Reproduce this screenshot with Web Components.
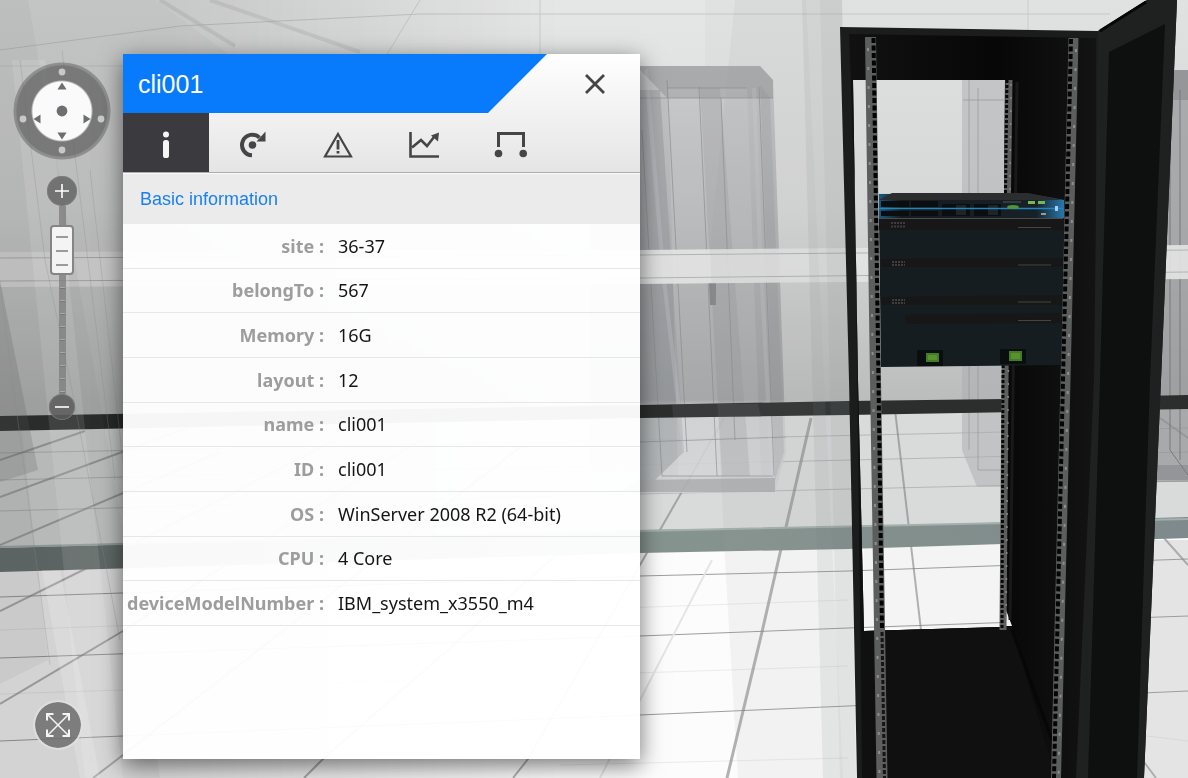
<!DOCTYPE html>
<html lang="en">
<head>
<meta charset="utf-8">
<title>Device cli001</title>
<meta name="viewport" content="width=device-width, initial-scale=1">
<style>
  html, body { margin: 0; height: 100%; }
  body { font-family: "Noto Sans", "Open Sans", sans-serif; background: #d4d5d5; }
</style>
</head>
<body>
<room-viewer>
  <room-scene slot="scene"></room-scene>
  <pan-pad slot="controls"></pan-pad>
  <zoom-slider slot="controls" value="86"></zoom-slider>
  <fullscreen-button slot="corner"></fullscreen-button>
  <device-panel>
    <span slot="title">cli001</span>
    <icon-tabs slot="tabs"></icon-tabs>
    <span slot="section">Basic information</span>
    <property-table></property-table>
  </device-panel>
</room-viewer>

<template id="t-room-viewer">
  <style>
    :host { display: grid; min-height: 100vh; overflow: hidden; }
    .scene, .ui { grid-area: 1 / 1; min-width: 0; }
    .scene { display: grid; }
    .ui { z-index: 1; display: flex; gap: 12px; padding: 54px 16px 19px 13px; }
    .rail { flex: none; width: 98px; display: flex; flex-direction: column; justify-content: space-between; padding: 8px 0 9px; }
    .top { display: flex; flex-direction: column; align-items: center; gap: 16px; }
    .corner { display: flex; padding-left: 20px; }
  </style>
  <div class="scene"><slot name="scene"></slot></div>
  <main class="ui">
    <div class="rail">
      <div class="top"><slot name="controls"></slot></div>
      <div class="corner"><slot name="corner"></slot></div>
    </div>
    <slot></slot>
  </main>
</template>

<template id="t-pan-pad">
  <style>
    :host { display: block; }
    .pad { width: 98px; height: 98px; display: grid; grid-template: 38px 22px 38px / 38px 22px 38px; border-radius: 50%;
      background: radial-gradient(circle, #fafafa 29px, rgba(98,98,98,.76) 31px, rgba(98,98,98,.76) 45px, rgba(98,98,98,.55) 46px, rgba(98,98,98,.5) 48px, transparent 49px); }
    button { border: 0; padding: 0; margin: 0; background: none; display: grid; place-items: center; cursor: pointer; }
    svg { display: block; }
    .up { grid-area: 1 / 2; } .left { grid-area: 2 / 1; } .mid { grid-area: 2 / 2; } .right { grid-area: 2 / 3; } .down { grid-area: 3 / 2; }
    .left svg { transform: rotate(-90deg); } .right svg { transform: rotate(90deg); } .down svg { transform: rotate(180deg); }
  </style>
  <div class="pad" role="group" aria-label="Pan">
    <button class="up" aria-label="Up"><svg width="22" height="38"><circle cx="11" cy="10" r="3.400" fill="#c8c8c8"/><path d="M11 20.500l4.600 7H6.400z" fill="#6c6e72"/></svg></button>
    <button class="left" aria-label="Left"><svg width="22" height="38"><circle cx="11" cy="10" r="3.400" fill="#c8c8c8"/><path d="M11 20.500l4.600 7H6.400z" fill="#6c6e72"/></svg></button>
    <button class="mid" aria-label="Reset"><svg width="22" height="22"><circle cx="11" cy="11" r="5.400" fill="#6c6e72"/></svg></button>
    <button class="right" aria-label="Right"><svg width="22" height="38"><circle cx="11" cy="10" r="3.400" fill="#c8c8c8"/><path d="M11 20.500l4.600 7H6.400z" fill="#6c6e72"/></svg></button>
    <button class="down" aria-label="Down"><svg width="22" height="38"><circle cx="11" cy="10" r="3.400" fill="#c8c8c8"/><path d="M11 20.500l4.600 7H6.400z" fill="#6c6e72"/></svg></button>
  </div>
</template>

<template id="t-zoom-slider">
  <style>
    :host { display: flex; flex-direction: column; align-items: center; }
    button { border: 0; padding: 0; width: 30px; height: 30px; border-radius: 50%; background: rgba(98,98,98,.82); box-shadow: inset 0 0 0 1px rgba(130,130,130,.6); display: grid; place-items: center; cursor: pointer; }
    button.out { width: 26px; height: 26px; background: rgba(90,90,90,.85); }
    input { appearance: none; -webkit-appearance: none; writing-mode: vertical-lr; direction: rtl; margin: 0; width: 24px; height: 188px;
      background:
        repeating-linear-gradient(#0000 0 11px, #a9a9a9 11px 12px, #777 12px 13px) center 70px / 5px 118px no-repeat,
        linear-gradient(rgba(124,124,124,.75), rgba(124,124,124,.75)) center / 7px 100% no-repeat; }
    input::-webkit-slider-thumb { -webkit-appearance: none; width: 24px; height: 50px; border-radius: 4px; border: 2px solid #858585;
      background:
        linear-gradient(#9b9b9b, #9b9b9b) center 9px / 12px 2px no-repeat,
        linear-gradient(#9b9b9b, #9b9b9b) center 23px / 12px 2px no-repeat,
        linear-gradient(#9b9b9b, #9b9b9b) center 37px / 12px 2px no-repeat, #f4f4f4; box-sizing: border-box; }
  </style>
  <button class="in" aria-label="Zoom in"><svg width="14" height="14"><path d="M7 0v14M0 7h14" stroke="#fff" stroke-width="1.600"/></svg></button>
  <input type="range" min="0" max="100" aria-label="Zoom">
  <button class="out" aria-label="Zoom out"><svg width="14" height="14"><path d="M0 7h14" stroke="#fff" stroke-width="1.600"/></svg></button>
</template>

<template id="t-fullscreen-button">
  <style>
    :host { display: block; }
    button { width: 50px; height: 50px; padding: 0; border-radius: 50%; border: 2px solid rgba(225,225,225,.8); background: rgba(112,112,112,.88); background-clip: padding-box; display: grid; place-items: center; cursor: pointer; }
  </style>
  <button aria-label="Full screen"><svg width="26" height="26" fill="none" stroke="#f4f4f4"><path d="M2 8.500V2h6.500M17.500 2H24v6.500M24 17.500V24h-6.500M8.500 24H2v-6.500" stroke-width="2"/><path d="M3 3l20 20M23 3L3 23" stroke-width="1.500"/></svg></button>
</template>

<template id="t-device-panel">
  <style>
    :host { display: flex; flex-direction: column; flex: 0 1 517px; min-width: 0; background: rgba(255,255,255,.96); box-shadow: 0 6px 22px rgba(0,0,0,.55); }
    .top { background: linear-gradient(#fff, #f3f3f3 45%, #e5e5e5); border-bottom: 1px solid #acacac; }
    header { display: flex; justify-content: space-between; height: 59px; }
    h1 { margin: 0; flex: 0 1 424px; box-sizing: border-box; padding-left: 15px; background: #077bfb; clip-path: polygon(0 0, 100% 0, calc(100% - 59px) 100%, 0 100%); color: #fff; font: 25px/60px "Liberation Sans", Arial, sans-serif; }
    .close { flex: none; width: 90px; border: 0; padding: 0; background: none; display: grid; place-items: center; cursor: pointer; }
    h2 { margin: 0; padding: 0 17px; border-top: 1px solid #fbfbfb; background: #ebebeb; color: #1a80f0; font: 18px/50px "Liberation Sans", Arial, sans-serif; }
  </style>
  <div class="top">
    <header>
      <h1><slot name="title"></slot></h1>
      <button class="close" aria-label="Close"><svg width="20" height="20"><path d="M1 1l18 18M19 1L1 19" stroke="#454545" stroke-width="2.800"/></svg></button>
    </header>
    <slot name="tabs"></slot>
  </div>
  <h2><slot name="section"></slot></h2>
  <slot></slot>
</template>

<template id="t-icon-tabs">
  <style>
    :host { display: flex; }
    button { flex: 0 1 86px; height: 59px; border: 0; padding: 4px 0 0; background: none; display: grid; place-items: center; color: #454547; cursor: pointer; }
    button[aria-selected="true"] { background: #3a3a3f; color: #f5f5f5; }
    [role=tablist] { display: flex; flex: 1; }
  </style>
  <div role="tablist">
    <button role="tab" aria-selected="true" aria-label="Information"><svg width="30" height="30" fill="currentColor"><circle cx="15" cy="4.500" r="3"/><rect x="12" y="10" width="6" height="18" rx="2.600"/></svg></button>
    <button role="tab" aria-selected="false" aria-label="Refresh"><svg width="30" height="30" fill="currentColor"><path d="M15 25.300A10.300 10.300 0 1 1 22.500 7.600" fill="none" stroke="currentColor" stroke-width="4"/><path d="M28.500 1.500v10h-9z"/><circle cx="15.500" cy="15" r="3.800"/></svg></button>
    <button role="tab" aria-selected="false" aria-label="Alarms"><svg width="32" height="30" fill="none" stroke="currentColor"><path d="M16 4L29 26.500H3z" stroke-width="2.200"/><path d="M16 10v9.500M16 21v2.500" stroke-width="2.800"/></svg></button>
    <button role="tab" aria-selected="false" aria-label="Statistics"><svg width="32" height="30" fill="none" stroke="currentColor" stroke-width="2.600"><path d="M2.500 2v24.500H31"/><path d="M4 17.500L13 10l6 6L26 7"/><path d="M31 2.500L23 5.500l7 6z" fill="currentColor" stroke="none"/></svg></button>
    <button role="tab" aria-selected="false" aria-label="Links"><svg width="34" height="30" fill="currentColor"><path d="M5.500 17V3.500h25V17" fill="none" stroke="currentColor" stroke-width="3"/><circle cx="5.500" cy="23.500" r="3.800"/><circle cx="30.200" cy="23.500" r="3.800"/></svg></button>
  </div>
</template>

<template id="t-property-table">
  <style>
    :host { display: block; }
    table { width: 100%; height: 402px; border-collapse: separate; border-spacing: 0; table-layout: fixed; font-size: 18px; line-height: 24px; }
    th, td { padding: 0; border-bottom: 1px solid #e7e7e8; vertical-align: middle; white-space: nowrap; }
    th { width: 201px; text-align: right; color: #9d9d9d; font-weight: 700; }
    td { padding-left: 14px; color: #151515; }
  </style>
  <table aria-label="Basic information"><tbody></tbody></table>
</template>

<template id="t-room-scene">
  <style>
    :host { display: grid; position: relative; background: #d4d5d5; }
    svg { position: absolute; inset: 0; width: 100%; height: 100%; }
  </style>
  <svg viewBox="0 0 1188 778" preserveAspectRatio="xMidYMid slice" aria-hidden="true">
    <defs>
      <linearGradient id="wall" x2="0" y2="1"><stop offset="0" stop-color="#e0e2e1"/><stop offset=".5" stop-color="#d6d8d7"/><stop offset="1" stop-color="#b9bbba"/></linearGradient>
      <linearGradient id="shade"><stop offset="0" stop-color="#000" stop-opacity=".13"/><stop offset=".3" stop-color="#000" stop-opacity=".13"/><stop offset="1" stop-color="#000" stop-opacity="0"/></linearGradient>
      <linearGradient id="cab" x2="0" y2="1"><stop offset="0" stop-color="#bfc0c2"/><stop offset=".6" stop-color="#a0a2a4"/><stop offset=".78" stop-color="#97999b"/><stop offset=".8" stop-color="#c9cbcc"/><stop offset="1" stop-color="#cfd1d2"/></linearGradient>
      <linearGradient id="edge"><stop offset="0" stop-color="#66706f"/><stop offset=".5" stop-color="#87958f"/><stop offset="1" stop-color="#7e8a8b"/></linearGradient>
      <linearGradient id="inside"><stop offset="0" stop-color="#111"/><stop offset=".6" stop-color="#070707"/><stop offset="1" stop-color="#131313"/></linearGradient>
      <linearGradient id="glow"><stop offset="0" stop-color="#195980"/><stop offset=".12" stop-color="#151b20"/><stop offset=".85" stop-color="#182127"/><stop offset="1" stop-color="#2778ad"/></linearGradient>
    </defs>
    <path d="M0 0H1188V400L640 405 0 417z" fill="url(#wall)"/>
    <path d="M0 430L640 417 1188 408V540L640 551 0 571z" fill="#d9dbdb"/>
    <path d="M0 570L640 551 1188 538V778H0z" fill="#fcfcfc"/>
    <!-- ceiling panels -->
    <path d="M155 0H705V70H250z" fill="#fff" opacity=".16"/>
    <path d="M0 50L180 26 420 14 840 14H1110" fill="none" stroke="#c6c8c7"/>
    <path d="M0 66H380L420 0M540 0v70M1028 0v30" fill="none" stroke="#cbcdcd"/>
    <path d="M160 0L235 46M210 0l150 52" stroke="#b8baba" stroke-width="4" opacity=".35"/>
    <!-- tiles -->
    <g fill="none" stroke="#7c7e7e" opacity=".75">
      <path d="M0 453L640 440 1188 428M0 480L640 465 1188 452M0 511L640 494 1188 481" opacity=".5"/>
      <path d="M0 597L640 576 848 571 1188 559M0 658L640 636 848 628 1188 616M0 741L640 715 848 706 1188 691"/>
      <path d="M0 630L848 600M0 694L848 666M560 765L848 758M950 712L1188 741" opacity=".18"/>
    </g>
    <g fill="none" stroke="#7e8080" stroke-width="2" opacity=".6">
      <path d="M0 460L85 431M0 497L190 427M0 545L220 452M0 611L83 570 330 443M0 704L123 631 420 440M93 778L123 755 523 445M304 778L323 759 585 530M513 778L528 759 640 565 724 418"/>
      <path d="M727 778L762 632 811 418" stroke-width="3"/>
      <path d="M895 410L921 630M1144 762L1156 778M1164 538L1188 565M1160 418L1188 438"/>
    </g>
    <path d="M600 778L712 560" stroke="#e4e5e5" fill="none" stroke-width="2"/>
    <!-- ghost cabinets -->
    <path d="M590 66H760L773 80 786 452 775 492 590 494z" fill="url(#cab)" opacity=".88"/>
    <path d="M590 66H760L773 80V98H667L640 70zM640 480L775 478V492H620z" fill="#85878a" opacity=".42"/>
    <path d="M640 90H660L684 452 655 480H640z" fill="#898b91" opacity=".4"/>
    <path d="M668 88H747L761 476H678z" fill="#fff" opacity=".1"/>
    <path d="M700 88H720L750 476H722zM760 84L770 98 784 452 775 480z" fill="#888a8c" opacity=".22"/>
    <path d="M640 98H773M759 87L774 476M721 98L735 440M699 87L717 476M642 130L662 476H773M667 80L687 452M747 88H668M640 442L786 437" stroke="#84868a" fill="none" opacity=".6"/>
    <path d="M709 282h7v23h-6z" fill="#85878a"/>
    <path d="M646 70l18 210 20 172M754 88l6 160 12 228" stroke="#d7d7df" stroke-width="4" fill="none" opacity=".2"/>
    <path d="M962 70H1020V487H977L962 450z" fill="#aaacb0" opacity=".5"/>
    <path d="M963 100H1004M969 80V450M978 88V470H1004" stroke="#95979b" fill="none" opacity=".7"/>
    <path d="M1160 70H1188V480H1150z" fill="#8d8f92" opacity=".65"/>
    <path d="M1160 70H1188V100H1165zM1150 465H1188V482H1150z" fill="#808285" opacity=".5"/>
    <path d="M1170 100V450L1188 475M1180 90V460" stroke="#77797d" fill="none"/>
    <!-- skirting, wall rail and glass base -->
    <path d="M0 416L640 405 848 401 1004 399 1188 395V409L848 415 640 418 0 431z" fill="#2c2e2e"/>
    <path d="M672 404h86l3 13h-88z" fill="#55575a" opacity=".3"/>
    <path d="M0 252L640 250 848 248 1188 245V279L848 282 640 284 0 287z" fill="#e3e3e3" opacity=".92"/>
    <path d="M0 258L640 255 1188 250M0 281L640 278 1188 272" fill="none" stroke="#b1b3b3"/>
    <path d="M0 548L640 530 848 527 1188 517V538L848 549 640 553 0 572z" fill="url(#edge)"/>
    <path d="M0 547L640 531 1188 519" stroke="#a4afae" fill="none" stroke-width="2"/>
    <!-- translucent glass walls -->
    <path d="M735 0H806L843 778H738L725 560 710 250z" fill="#9a9c9c" opacity=".1"/>
    <path d="M802 0H842L857 778H823z" fill="#747878" opacity=".12"/>
    <path d="M820 0H842L856 778H840z" fill="#888" opacity=".1"/>
    <path d="M864 540H1004V628H864z" fill="#999" opacity=".08"/>
    <path d="M1140 540H1188V778H1140z" fill="#999" opacity=".24"/>
    <path d="M0 0H560V778H0z" fill="url(#shade)"/>
    <path d="M0 0H28L130 570 160 778H0z" fill="#666" opacity=".07"/>
    <path d="M0 280L38 470 0 482z" fill="#555" opacity=".22"/>
    <path d="M0 431H22L48 660 0 684z" fill="#777" opacity=".1"/>
    <path d="M12 60L45 60 123 778H85z" fill="#fff" opacity=".1"/>
    <path d="M42 570L60 570 100 778H80z" fill="#fff" opacity=".16"/>
    <path d="M20 60L45 260 70 380 120 640M0 285L50 665M62 50L115 480M90 170L125 480" fill="none" stroke="#888" opacity=".3"/>
    <!-- rack shell with its open back -->
    <path fill-rule="evenodd" d="M840 27L1098 31 1147 0H1177L1161 380 1144 778H857L849 380zM853 80L1005 80 1003 380 1000 627 864 631 858 380z" fill="#1b1c1c"/>
    <path fill-rule="evenodd" d="M849 34L1096 38V778H862L855 200zM853 80L1005 80 1003 380 1000 627 864 631 858 380z" fill="url(#inside)"/>
    <path d="M1098 31L1147 0H1177L1161 380 1144 778H1076L1094 380z" fill="#1f2020"/>
    <path d="M1109 52L1165 24 1150 380 1137 778H1088L1100 380z" fill="#0e0f0f"/>
    <path d="M1100 31L1146 2" stroke="#060606" stroke-width="3"/>
    <path d="M864 631L1012 627 1056 778H884z" fill="#101010"/>
    <path d="M1012 630L1052 740" stroke="#070707" stroke-width="3"/>
    <path d="M1006 610L1012 626H1004z" fill="#f2f2f2"/>
    <path d="M1017 82L1010 620" stroke="#191919" stroke-width="3"/>
    <!-- rails -->
    <g fill="none">
      <path d="M1009 80L1005 380 1003 630" stroke="#5d5e5e" stroke-width="7"/>
      <path d="M1007 80L1003 380 1002 630" stroke="#080808" stroke-width="3" stroke-dasharray="3 2"/>
      <path d="M1011 84L1006 628" stroke="#888" stroke-width="1.500" stroke-dasharray="2 11"/>
      <path d="M870.500 37L875.500 380 882 778" stroke="#5c5d5d" stroke-width="11"/>
      <path d="M873.500 38L878.500 380 882 630" stroke="#030303" stroke-width="4" stroke-dasharray="5 2.500"/>
      <path d="M882 632L884.500 778" stroke="#151515" stroke-width="3" stroke-dasharray="4 2"/>
      <path d="M868 48L873 380 879.500 778" stroke="#8e8e8e" stroke-width="2" stroke-dasharray="3 16"/>
      <path d="M1073.500 38L1065.500 380 1056 778" stroke="#5c5d5d" stroke-width="10"/>
      <path d="M1071 39L1063 380 1054 778" stroke="#050505" stroke-width="4" stroke-dasharray="5 2.500"/>
      <path d="M1076 49L1068 380 1058.500 778" stroke="#8e8e8e" stroke-width="2" stroke-dasharray="3 16"/>
    </g>
    <!-- servers -->
    <path d="M879 218H1064L1061 365 881 367z" fill="#151d21"/>
    <path d="M879 219H1064V230H879zM881 259L1063 258V267H881zM881 297L1062 295V305H881zM905 315L1062 313V323L905 324z" fill="#171717"/>
    <path d="M879 194L1028 193 1064 200V218H879z" fill="url(#glow)"/>
    <path d="M892 193L1028 193 1062 200H879z" fill="#2b2d2e"/>
    <path d="M881 201h28v6h-28zM911 201h27v6h-27zM881 211h28v5h-28zM911 211h27v5h-27zM942 204h28v12h-28zM974 204h27v12h-27z" fill="#0c0d0e"/>
    <path d="M956 205h10v10h-10zM988 205h10v10h-10z" fill="#1e2529"/>
    <path d="M879 208.500H1063" stroke="#2385bd" stroke-width="1.500"/>
    <path d="M879 218.500H1063" stroke="#4a4d4f"/>
    <path d="M1028 201h7v3h-7zM1038 201h7v3h-7z" fill="#74b954"/>
    <ellipse cx="1013" cy="207" rx="6" ry="2" fill="#4f963b"/>
    <path d="M1055 206h3v5h-3z" fill="#a9c9ff"/>
    <path d="M1041 213h5v2h-5z" fill="#999"/>
    <path d="M1003 202h18" stroke="#555"/>
    <path d="M891 223h14M891 226.500h14M892 262h13M892 265h13M892 300h13M892 303h13" stroke="#666" stroke-width="2" stroke-dasharray="2 1" opacity=".5"/>
    <path d="M1018 227.500h33M1018 265h33M1018 302h33M1018 320.500h33" stroke="#444"/>
    <path d="M917 350h26v16h-26zM1000 349h26v15h-26z" fill="#0b0e0f"/>
    <path d="M926 353h13v9h-13zM1009 351h13v10h-13z" fill="#427c27"/>
    <path d="M928 355h9v5h-9zM1011 353h9v6h-9z" fill="#58922f"/>
  </svg>
</template>

<script>
  const define = (name, setup) => customElements.define(name, class extends HTMLElement {
    constructor() {
      super();
      this.attachShadow({ mode: "open" }).append(document.getElementById("t-" + name).content.cloneNode(true));
    }
    connectedCallback() { if (setup) setup(this, this.shadowRoot); }
  });

  define("room-viewer");
  define("room-scene");
  define("pan-pad");
  define("zoom-slider", (host, root) => {
    const input = root.querySelector("input");
    input.value = host.getAttribute("value") || 50;
    root.querySelector(".in").onclick = () => input.stepUp(10);
    root.querySelector(".out").onclick = () => input.stepDown(10);
  });
  define("fullscreen-button", (host, root) => {
    root.querySelector("button").onclick = () => document.documentElement.requestFullscreen();
  });
  define("device-panel", (host, root) => {
    root.querySelector(".close").onclick = () => host.remove();
  });
  define("icon-tabs", (host, root) => {
    const tabs = [...root.querySelectorAll("button")];
    tabs.forEach(tab => tab.onclick = () => tabs.forEach(t => t.setAttribute("aria-selected", String(t === tab))));
  });

  const properties = [
    ["site", "36-37"], ["belongTo", "567"], ["Memory", "16G"], ["layout", "12"], ["name", "cli001"],
    ["ID", "cli001"], ["OS", "WinServer 2008 R2 (64-bit)"], ["CPU", "4 Core"], ["deviceModelNumber", "IBM_system_x3550_m4"]
  ];
  define("property-table", (host, root) => {
    const body = root.querySelector("tbody");
    body.replaceChildren();
    for (const [label, value] of properties) {
      const row = body.insertRow();
      const th = document.createElement("th");
      th.scope = "row";
      th.textContent = label + " :";
      row.append(th);
      row.insertCell().textContent = value;
    }
  });
</script>
</body>
</html>
